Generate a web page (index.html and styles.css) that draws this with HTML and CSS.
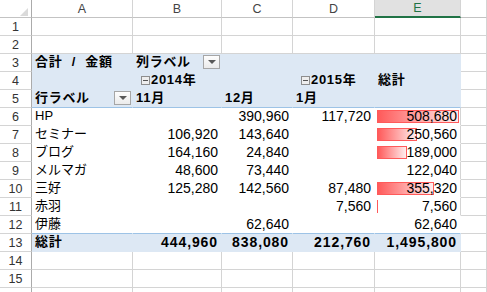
FILE: index.html
```html
<!DOCTYPE html>
<html lang="ja">
<head>
<meta charset="utf-8">
<title>Pivot</title>
<link rel="stylesheet" href="styles.css">
</head>
<body>
<div class="sheet">
  <!-- header -->
  <div class="c corner"><i class="tri"></i></div>
  <div class="c ch">A</div>
  <div class="c ch">B</div>
  <div class="c ch">C</div>
  <div class="c ch">D</div>
  <div class="c ch sel">E</div>
  <div class="c ch"></div>
  <!-- 1 -->
  <div class="c rh">1</div>
  <div class="c"></div><div class="c"></div><div class="c"></div><div class="c"></div><div class="c"></div><div class="c"></div>
  <!-- 2 -->
  <div class="c rh">2</div>
  <div class="c"></div><div class="c"></div><div class="c"></div><div class="c"></div><div class="c"></div><div class="c"></div>
  <!-- 3 -->
  <div class="c rh">3</div>
  <div class="c pv blue lab b ws">合計 / 金額</div>
  <div class="c pv blue lab b">列ラベル<span class="dd"></span></div>
  <div class="c pv blue"></div>
  <div class="c pv blue"></div>
  <div class="c pv blue"></div>
  <div class="c"></div>
  <!-- 4 -->
  <div class="c rh">4</div>
  <div class="c pv blue"></div>
  <div class="c pv blue lab b"><span class="tg"></span>2014年</div>
  <div class="c pv blue"></div>
  <div class="c pv blue lab b"><span class="tg"></span>2015年</div>
  <div class="c pv blue lab b">総計</div>
  <div class="c"></div>
  <!-- 5 -->
  <div class="c rh">5</div>
  <div class="c pv blue bl lab b">行ラベル<span class="dd"></span></div>
  <div class="c pv blue bl lab b">11月</div>
  <div class="c pv blue bl lab b">12月</div>
  <div class="c pv blue bl lab b">1月</div>
  <div class="c pv blue bl"></div>
  <div class="c"></div>
  <!-- 6 -->
  <div class="c rh">6</div>
  <div class="c pv lab">HP</div>
  <div class="c pv num"></div>
  <div class="c pv num">390,960</div>
  <div class="c pv num">117,720</div>
  <div class="c pv e num"><span class="bar" style="width:82px"></span><span class="t">508,680</span></div>
  <div class="c"></div>
  <!-- 7 -->
  <div class="c rh">7</div>
  <div class="c pv lab">セミナー</div>
  <div class="c pv num">106,920</div>
  <div class="c pv num">143,640</div>
  <div class="c pv num"></div>
  <div class="c pv e num"><span class="bar" style="width:40px"></span><span class="t">250,560</span></div>
  <div class="c"></div>
  <!-- 8 -->
  <div class="c rh">8</div>
  <div class="c pv lab">ブログ</div>
  <div class="c pv num">164,160</div>
  <div class="c pv num">24,840</div>
  <div class="c pv num"></div>
  <div class="c pv e num"><span class="bar" style="width:30px"></span><span class="t">189,000</span></div>
  <div class="c"></div>
  <!-- 9 -->
  <div class="c rh">9</div>
  <div class="c pv lab">メルマガ</div>
  <div class="c pv num">48,600</div>
  <div class="c pv num">73,440</div>
  <div class="c pv num"></div>
  <div class="c pv e num"><span class="t">122,040</span></div>
  <div class="c"></div>
  <!-- 10 -->
  <div class="c rh">10</div>
  <div class="c pv lab">三好</div>
  <div class="c pv num">125,280</div>
  <div class="c pv num">142,560</div>
  <div class="c pv num">87,480</div>
  <div class="c pv e num"><span class="bar" style="width:57px"></span><span class="t">355,320</span></div>
  <div class="c"></div>
  <!-- 11 -->
  <div class="c rh">11</div>
  <div class="c pv lab">赤羽</div>
  <div class="c pv num"></div>
  <div class="c pv num"></div>
  <div class="c pv num">7,560</div>
  <div class="c pv e num"><span class="bar line" style="width:1px"></span><span class="t">7,560</span></div>
  <div class="c"></div>
  <!-- 12 -->
  <div class="c rh">12</div>
  <div class="c pv bl lab">伊藤</div>
  <div class="c pv bl num"></div>
  <div class="c pv bl num">62,640</div>
  <div class="c pv bl num"></div>
  <div class="c pv bl num">62,640</div>
  <div class="c"></div>
  <!-- 13 -->
  <div class="c rh">13</div>
  <div class="c pv blue lab b">総計</div>
  <div class="c pv blue num b bn">444,960</div>
  <div class="c pv blue num b bn">838,080</div>
  <div class="c pv blue num b bn">212,760</div>
  <div class="c pv blue num b bn">1,495,800</div>
  <div class="c"></div>
  <!-- 14 -->
  <div class="c rh">14</div>
  <div class="c"></div><div class="c"></div><div class="c"></div><div class="c"></div><div class="c"></div><div class="c"></div>
  <!-- 15 -->
  <div class="c rh">15</div>
  <div class="c"></div><div class="c"></div><div class="c"></div><div class="c"></div><div class="c"></div><div class="c"></div>
  <!-- 16 (only its top edge is visible) -->
  <div class="c rh"></div>
  <div class="c"></div><div class="c"></div><div class="c"></div><div class="c"></div><div class="c"></div><div class="c"></div>
</div>
</body>
</html>
```

FILE: styles.css
```css
html, body {
  margin: 0;
  padding: 0;
  background: #ffffff;
}
body {
  width: 487px;
  height: 292px;
  overflow: hidden;
}
.sheet {
  display: grid;
  grid-template-columns: 32px 101px 89px 71px 82px 86px 26px;
  grid-auto-rows: 18px;
}
.c {
  box-sizing: border-box;
  border-right: 1px solid #d4d4d4;
  border-bottom: 1px solid #d4d4d4;
  display: flex;
  align-items: flex-end;
  padding: 0 3px 1px 3px;
  position: relative;
  white-space: nowrap;
  font-family: "Liberation Sans", "Noto Sans CJK JP", sans-serif;
  font-size: 14px;
  line-height: 16px;
  color: #000000;
}
.corner {
  justify-content: flex-end;
  padding: 0 3px 1px 0;
  border-right-color: #ababab;
  border-bottom-color: #c3c3c3;
}
.tri {
  width: 0;
  height: 0;
  border-left: 8px solid transparent;
  border-bottom: 8px solid #dadada;
}
.ch {
  justify-content: center;
  align-items: center;
  padding: 0;
  font-size: 12.5px;
  color: #444444;
  border-bottom-color: #c3c3c3;
}
.ch.sel {
  background: #e1e1e1;
  color: #217346;
  border-bottom: 2px solid #217346;
}
.rh {
  justify-content: center;
  align-items: center;
  padding: 0;
  font-size: 12.5px;
  color: #333333;
  border-right-color: #ababab;
}
.pv {
  border-right-color: transparent;
  border-bottom-color: transparent;
}
.pv.e {
  border-right-color: #d4d4d4;
}
.blue {
  background: #dde8f4;
}
.pv.bl {
  border-bottom-color: #9dc3e6;
}
.lab {
  font-size: 13px;
}
.lab.b {
  letter-spacing: 0.7px;
}
.ws {
  word-spacing: 5px;
}
.b {
  font-weight: bold;
}
.bn {
  letter-spacing: 0.9px;
}
.num {
  justify-content: flex-end;
}
.dd {
  margin-left: auto;
  margin-right: -2px;
  align-self: center;
  width: 17px;
  height: 14px;
  box-sizing: border-box;
  border: 1px solid #a6a6a6;
  background: linear-gradient(#fdfdfd, #ebebeb);
  display: flex;
  align-items: center;
  justify-content: center;
}
.dd::after {
  content: "";
  width: 0;
  height: 0;
  border-left: 4px solid transparent;
  border-right: 4px solid transparent;
  border-top: 4px solid #595959;
}
.tg {
  width: 9px;
  height: 9px;
  box-sizing: border-box;
  border: 1px solid #8e8e8e;
  background: #eeeeee;
  margin: 0 1px 3px 5px;
  position: relative;
}
.tg::after {
  content: "";
  position: absolute;
  left: 1px;
  right: 1px;
  top: 3px;
  height: 1px;
  background: #555555;
}
.bar {
  position: absolute;
  left: 2px;
  top: 2px;
  height: 13px;
  box-sizing: border-box;
  border: 1px solid #ff5a5a;
  background: linear-gradient(to right, #ff5a5a, #ffeeee);
}
.bar.line {
  border-width: 0 0 0 1px;
}
.t {
  position: relative;
}
```
